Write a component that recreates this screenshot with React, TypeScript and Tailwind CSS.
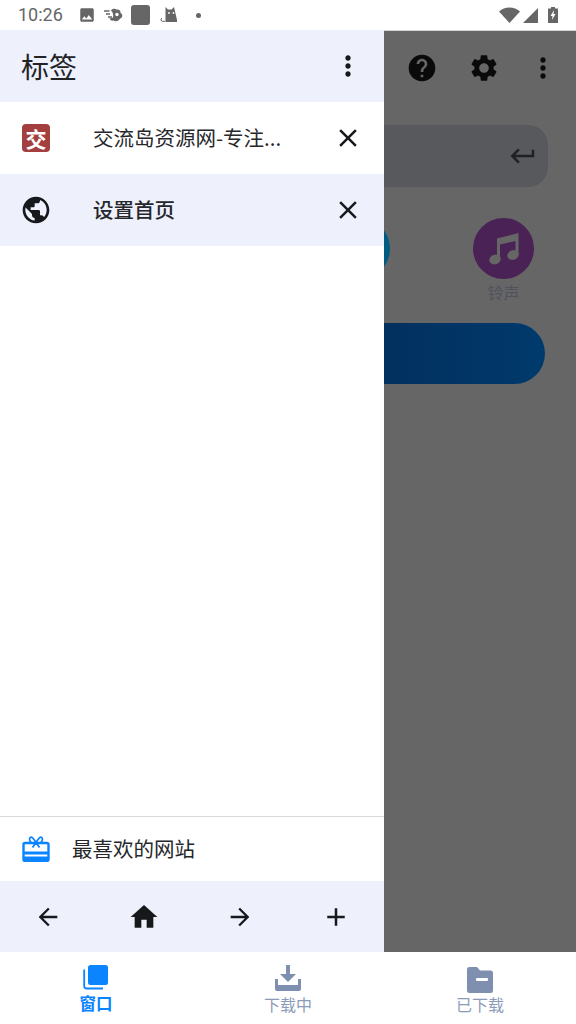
import { MdClose, MdMoreVert, MdHelp, MdSettings, MdKeyboardReturn, MdPublic, MdHome, MdArrowBack, MdArrowForward, MdAdd, MdImage } from "react-icons/md";

function StatusBar() {
  return (
    <div className="flex h-[30px] shrink-0 items-center bg-white text-[#666]">
      <span className="ml-[18px] w-[60px] font-['Roboto',sans-serif] text-[18px] leading-none">10:26</span>
      <MdImage size={18} className="-mt-px" />
      <svg width="19" height="14" viewBox="0 0 19 14" fill="none" className="ml-[8px] -mt-px">
        <path d="M0 3h5.500M2 6h4M4 9h4" stroke="#666" strokeWidth="1.400" />
        <path d="M7 2.500C8 .5 11 0 12.500 1.500 15 1 17 3 16.500 5 19 6 19 10 16 10.500 15 13 11.500 14 9.500 12.500 7.500 13 6 12 5.500 10.500L9 9.500C9.500 7 9 4 7 2.500z" fill="#666" />
        <circle cx="13" cy="6.500" r="1.700" fill="#fff" />
      </svg>
      <div className="ml-[8px] h-[20px] w-[19px] rounded-[3px] bg-[#666]" />
      <svg width="17" height="15" viewBox="0 0 17 15" fill="#666" className="ml-[10px] -mt-px">
        <path d="M5.500 0l2.500 2.500h3.500L14 0l3 13v2H5.500V0z" />
        <path d="M5 14.300H2.200C.8 14.300.6 12 1.800 11" fill="none" stroke="#666" strokeWidth="1" />
        <circle cx="9" cy="6" r=".9" fill="#fff" />
        <circle cx="13.500" cy="6" r=".9" fill="#fff" />
      </svg>
      <div className="ml-[19px] h-[5px] w-[5px] rounded-full bg-[#666]" />
      <div className="ml-auto mr-[18px] flex items-center">
        <svg width="21" height="16" viewBox="0 0 21 16" fill="#666">
          <path d="M0 4.500C3 1.800 6.500.5 10.500.5S18 1.800 21 4.500L10.500 16 0 4.500z" />
        </svg>
        <svg width="15" height="15" viewBox="0 0 15 15" fill="#666" className="ml-[3px]">
          <path d="M15 0v15H0L15 0z" />
        </svg>
        <svg width="10" height="16" viewBox="0 0 10 16" className="ml-[10px]">
          <path d="M3 0h4v1.500h3V16H0V1.500h3V0z" fill="#666" />
          <path d="M6 3L2.500 9H4.500L4 13l3.500-6H5.500L6 3z" fill="#fff" />
        </svg>
      </div>
    </div>
  );
}

function TabRow({ title, active, icon }: { title: string; active?: boolean; icon: React.ReactNode }) {
  return (
    <div className={`flex h-[72px] items-center pl-5 pr-[21px] ${active ? "bg-[#eef0fb]" : "bg-white"}`}>
      <div className="flex w-8 justify-center">{icon}</div>
      <span className={`ml-[41px] -mt-[2px] flex-1 text-[20.5px] text-[#26272b] ${active ? "font-medium" : ""}`}>{title}</span>
      <MdClose size={30} className="text-[#17181c]" />
    </div>
  );
}

function GiftIcon() {
  return (
    <svg width="28" height="26" viewBox="0 0 28 26" fill="none" className="text-[#0a84ff]">
      <path d="M3 7h22a1.500 1.500 0 0 1 1.500 1.500v15a1.500 1.500 0 0 1-1.500 1.500H3a1.500 1.500 0 0 1-1.500-1.500v-15A1.500 1.500 0 0 1 3 7z" stroke="currentColor" strokeWidth="2.400" />
      <path d="M2 15.500h24v3H2z" fill="currentColor" />
      <path d="M2 20.500h24v3.500H2z" fill="currentColor" />
      <path d="M14 6.500C12 3.500 10.500 1 9 1.200 7.200 1.500 7 4.500 9 6.500M14 6.500c2-3 3.500-5.500 5-5.300 1.800.3 2 3.300 0 5.300M14 6.500l-3.500 5M14 6.500l3.500 5" stroke="currentColor" strokeWidth="1.800" />
    </svg>
  );
}

function Drawer() {
  return (
    <div className="flex w-[384px] shrink-0 flex-col bg-white">
      <div className="flex h-[72px] items-center justify-between bg-[#eef0fb] pl-[21px] pr-[20px]">
        <span className="text-[28px] text-[#222327]">标签</span>
        <MdMoreVert size={32} className="text-[#17181c]" />
      </div>
      <TabRow
        title="交流岛资源网-专注..."
        icon={
          <div className="flex h-[28px] w-[28px] items-center justify-center rounded-[4px] bg-[#a33f3f] text-[21px] font-bold leading-none text-white">
            交
          </div>
        }
      />
      <TabRow title="设置首页" active icon={<MdPublic size={32} className="text-[#17181c]" />} />
      <div className="flex-1" />
      <div className="flex h-[65px] items-center border-t border-[#d9d9d9] pl-5">
        <div className="flex w-8 justify-center">
          <GiftIcon />
        </div>
        <span className="ml-5 -mt-[2px] text-[20.5px] text-[#26272b]">最喜欢的网站</span>
      </div>
      <div className="grid h-[71px] grid-cols-4 items-center justify-items-center bg-[#eef0fb] text-[#17181c]">
        <MdArrowBack size={28} />
        <MdHome size={32} />
        <MdArrowForward size={28} />
        <MdAdd size={30} />
      </div>
    </div>
  );
}

// 抽屉后面被遮罩盖住的页面
function DimmedPage() {
  return (
    <div className="flex min-w-0 flex-1 flex-col overflow-hidden border-t border-[#d4d4d4] bg-[#666666]">
      <div className="flex h-[73px] shrink-0 items-center justify-end pr-[17px] text-[#0a0a0a]">
        <MdHelp size={32} />
        <MdSettings size={32} className="ml-[30px]" />
        <MdMoreVert size={32} className="ml-[27px]" />
      </div>
      <div className="mr-[28px] mt-[21px] flex h-[62px] shrink-0 items-center justify-end rounded-r-[20px] bg-[#58595c] pr-[10px]">
        <MdKeyboardReturn size={30} className="text-[#1f2023]" />
      </div>
      <div className="mt-[31px] flex items-start justify-between pr-[42px]">
        <div className="-ml-[55px] h-[61px] w-[61px] rounded-full bg-[#005b82]" />
        <div className="flex flex-col items-center">
          <div className="flex h-[61px] w-[61px] items-center justify-center rounded-full bg-[#4a2256]">
            <svg width="30" height="33" viewBox="0 0 30 33" fill="#666666">
              <path d="M8 6.500L29.500 1v21h-3V9L11 12.500V28H8V6.500z" />
              <ellipse cx="6" cy="27.500" rx="5.800" ry="4.800" transform="rotate(-20 6 27.500)" />
              <ellipse cx="24" cy="23" rx="5.800" ry="4.800" transform="rotate(-20 24 23)" />
            </svg>
          </div>
          <span className="mt-px text-[16px] leading-[24px] text-[#50535c]">铃声</span>
        </div>
      </div>
      <div className="mr-[31px] mt-[19px] h-[61px] shrink-0 rounded-r-full bg-gradient-to-r from-[#02305f] to-[#003a6c]" />
    </div>
  );
}

function BottomNav() {
  return (
    <div className="grid h-[72px] shrink-0 grid-cols-3 bg-white text-[16px] leading-[20px]">
      <div className="flex flex-col items-center pt-[12px] font-semibold text-[#0a84ff]">
        <svg width="26" height="26" viewBox="0 0 26 26" fill="none">
          <rect x="5" y="1" width="20" height="20" rx="2.500" fill="currentColor" />
          <path d="M1.200 5.500V22a2.500 2.500 0 0 0 2.500 2.500H20" stroke="currentColor" strokeWidth="1.800" />
        </svg>
        <span className="mt-[3px] text-[16.500px]">窗口</span>
      </div>
      <div className="flex flex-col items-center pt-[13px] text-[#8d9bb8]">
        <svg width="26" height="27" viewBox="0 0 26 27" fill="#7f8fb0">
          <path d="M11 0h4v9h6l-8 8-8-8h6V0z" />
          <path d="M0 14h3v6h20v-6h3v10a2 2 0 0 1-2 2H2a2 2 0 0 1-2-2V14z" />
        </svg>
        <span className="mt-[2px]">下载中</span>
      </div>
      <div className="flex flex-col items-center pt-[15px] text-[#8d9bb8]">
        <svg width="26" height="26" viewBox="0 0 26 26" fill="#7f8fb0">
          <path d="M2.500 0H10l3 3.500h10.500A2.500 2.500 0 0 1 26 6v17.500a2.500 2.500 0 0 1-2.500 2.500h-21A2.500 2.500 0 0 1 0 23.500v-21A2.500 2.500 0 0 1 2.500 0z" />
          <rect x="9" y="11" width="12" height="3" rx="1" fill="#fff" />
        </svg>
        <span className="mt-px">已下载</span>
      </div>
    </div>
  );
}

export default function App() {
  return (
    <div className="flex h-[1024px] w-[576px] flex-col overflow-hidden bg-white font-['Noto_Sans_CJK_SC','Noto_Sans',sans-serif]">
      <StatusBar />
      <div className="flex min-h-0 flex-1">
        <Drawer />
        <DimmedPage />
      </div>
      <BottomNav />
    </div>
  );
}
